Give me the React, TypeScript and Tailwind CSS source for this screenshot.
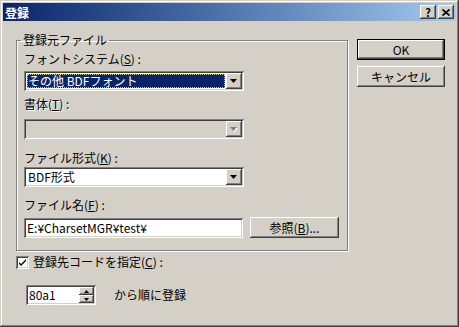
import type { ReactNode } from "react";
import clsx from "clsx";

const FACE = "bg-[#d4d0c8]";
const RAISED =
  "shadow-[inset_-1px_-1px_#404040,inset_1px_1px_#ffffff,inset_-2px_-2px_#808080,inset_2px_2px_#d4d0c8]";
const SUNKEN =
  "shadow-[inset_1px_1px_#808080,inset_-1px_-1px_#ffffff,inset_2px_2px_#404040,inset_-2px_-2px_#d4d0c8]";
const GRAY_TEXT = "text-[#808080] [text-shadow:1px_1px_0_#ffffff]";

/** underlined access key inside a label */
function Key({ c }: { c: string }) {
  return <span className="underline underline-offset-[1px]">{c}</span>;
}

function Arrow({ disabled }: { disabled?: boolean }) {
  return (
    <svg width="8" height="5" viewBox="0 0 8 5" aria-hidden>
      {disabled && <path d="M1 1h7L4.5 5z" fill="#ffffff" />}
      <path d="M0 0h7L3.5 4z" fill={disabled ? "#808080" : "#000000"} />
    </svg>
  );
}

function Combo({
  text,
  selected,
  disabled,
}: {
  text?: string;
  selected?: boolean;
  disabled?: boolean;
}) {
  return (
    <div
      className={clsx(
        "flex h-[20px] w-[220px] p-[2px]",
        SUNKEN,
        disabled ? FACE : "bg-white",
      )}
    >
      <div className="flex min-w-0 flex-1 p-[1px]">
        {text && (
          <div
            className={clsx(
              "flex flex-1 items-center pl-[1px] text-[12px] leading-[14px]",
              selected
                ? "bg-[#0a246a] text-white outline-1 outline-dotted outline-[#c8c870] -outline-offset-1"
                : "text-black",
            )}
          >
            {text}
          </div>
        )}
      </div>
      <div className={clsx("flex w-[16px] items-center justify-center", FACE, RAISED)}>
        <Arrow disabled={disabled} />
      </div>
    </div>
  );
}

function Button({
  children,
  isDefault,
  className,
}: {
  children: ReactNode;
  isDefault?: boolean;
  className?: string;
}) {
  return (
    <div
      className={clsx(
        "flex h-[21px] w-[88px]",
        FACE,
        isDefault && "border border-black",
        className,
      )}
    >
      <div
        className={clsx(
          "flex flex-1 items-center justify-center text-[12px] leading-[14px] text-black",
          RAISED,
        )}
      >
        {children}
      </div>
    </div>
  );
}

function Label({ children, className }: { children: ReactNode; className?: string }) {
  return <div className={clsx("text-[12px] leading-[14px] text-black", className)}>{children}</div>;
}

function TitleBar() {
  return (
    <div className="flex h-[18px] items-center bg-gradient-to-r from-[#0a246a] to-[#a6caf0] pl-[2px] pr-[2px]">
      <span className="flex-1 pt-[2px] text-[12px] font-bold leading-[14px] text-white">登録</span>
      <div className="flex gap-[2px]">
        <div className={clsx("flex h-[14px] w-[16px] items-center justify-center", FACE, RAISED)}>
          <span className="text-[11px] font-bold leading-[11px] text-black">?</span>
        </div>
        <div className={clsx("flex h-[14px] w-[16px] items-center justify-center", FACE, RAISED)}>
          <svg width="8" height="7" viewBox="0 0 8 7" aria-hidden>
            <path d="M0.5 0.5l7 6M7.5 0.5l-7 6" stroke="#000" strokeWidth="1.6" />
          </svg>
        </div>
      </div>
    </div>
  );
}

export default function App() {
  return (
    <div className="font-['Noto_Sans_CJK_JP','Noto_Sans',sans-serif]">
      <div
        className={clsx(
          "flex h-[327px] w-[459px] flex-col p-[3px]",
          FACE,
          "shadow-[inset_-1px_-1px_#404040,inset_1px_1px_#d4d0c8,inset_-2px_-2px_#808080,inset_2px_2px_#ffffff]",
        )}
      >
        <TitleBar />

        <div className="flex flex-1 pl-[13px] pt-[12px]">
          {/* left: source file group + start code */}
          <div className="flex flex-col">
            <fieldset className="w-[332px] border border-[#808080] pb-[12px] pl-[7px] pt-[5px] shadow-[inset_1px_1px_#ffffff,1px_1px_#ffffff]">
              <legend className="-ml-[3px] px-[2px] text-[12px] leading-[14px] text-black">
                登録元ファイル
              </legend>
              <Label>
                フォントシステム(<Key c="S" />) :
              </Label>
              <div className="mt-[5px]">
                <Combo text="その他 BDFフォント" selected />
              </div>
              <Label className={clsx("mt-[6px]", GRAY_TEXT)}>
                書体(<Key c="T" />) :
              </Label>
              <div className="mt-[8px]">
                <Combo disabled />
              </div>
              <Label className="mt-[12px]">
                ファイル形式(<Key c="K" />) :
              </Label>
              <div className="mt-[2px]">
                <Combo text="BDF形式" />
              </div>
              <Label className="mt-[11px]">
                ファイル名(<Key c="F" />) :
              </Label>
              <div className="mt-[5px] flex items-center gap-[7px]">
                <div className={clsx("flex h-[20px] w-[219px] items-center bg-white pl-[3px]", SUNKEN)}>
                  <span className="text-[12px] leading-[14px] text-black">E:¥CharsetMGR¥test¥</span>
                </div>
                <Button className="w-[89px]">
                  参照(<Key c="B" />)...
                </Button>
              </div>
            </fieldset>

            <div className="mt-[4px] flex items-center gap-[4px]">
              <div className={clsx("flex h-[13px] w-[13px] items-center justify-center bg-white", SUNKEN)}>
                <svg width="7" height="7" viewBox="0 0 7 7" aria-hidden>
                  <path d="M0 2l2 2 5-5v2L2 6 0 4z" fill="#000" transform="translate(0 1)" />
                </svg>
              </div>
              <Label>
                登録先コードを指定(<Key c="C" />) :
              </Label>
            </div>

            <div className="ml-[10px] mt-[16px] flex items-center gap-[18px]">
              <div className={clsx("flex h-[20px] w-[70px] bg-white p-[2px]", SUNKEN)}>
                <div className="flex flex-1 items-center pl-[1px] text-[12px] leading-[14px] text-black">
                  80a1
                </div>
                <div className="flex w-[15px] flex-col">
                  <div className={clsx("flex flex-1 items-center justify-center", FACE, RAISED)}>
                    <svg width="5" height="3" viewBox="0 0 5 3" aria-hidden>
                      <path d="M2.5 0L5 3H0z" fill="#000" />
                    </svg>
                  </div>
                  <div className={clsx("flex flex-1 items-center justify-center", FACE, RAISED)}>
                    <svg width="5" height="3" viewBox="0 0 5 3" aria-hidden>
                      <path d="M0 0h5L2.5 3z" fill="#000" />
                    </svg>
                  </div>
                </div>
              </div>
              <Label>から順に登録</Label>
            </div>
          </div>

          {/* right: dialog buttons */}
          <div className="ml-[9px] flex flex-col gap-[6px] pt-[6px]">
            <Button isDefault>OK</Button>
            <Button>キャンセル</Button>
          </div>
        </div>
      </div>
    </div>
  );
}
